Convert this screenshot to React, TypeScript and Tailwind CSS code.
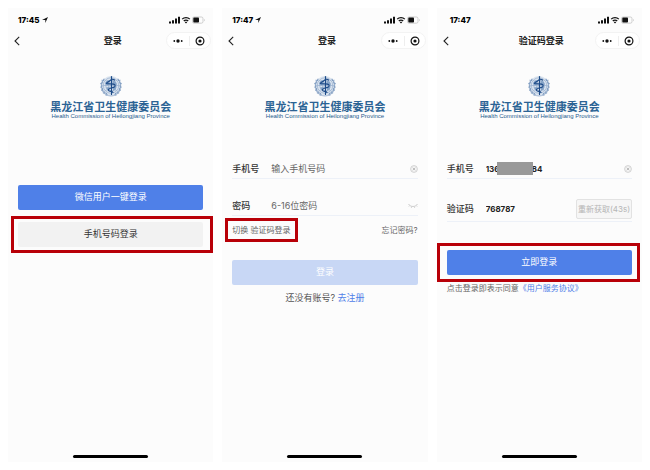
import type { ReactNode } from "react";

const leaf = "M0 0C1.6-.9 2.6-2.4 2.4-4.4C.8-3.6-.2-2 0 0Z";

const wreath = [
  [15, 40, -70],
  [9.5, 37, -50],
  [5.5, 32, -32],
  [3, 26, -18],
  [2.5, 19.5, -4],
  [4.5, 13.5, 12],
];

function Emblem() {
  return (
    <svg viewBox="0 0 44 44" className="size-[22px]" aria-hidden="true">
      <circle cx="22" cy="22" r="20" fill="#dbe4ef" />
      <g fill="none" stroke="#7c9ac0" strokeWidth="1">
        <circle cx="22" cy="21" r="15.500" />
        <circle cx="22" cy="21" r="10.500" />
        <circle cx="22" cy="21" r="5.500" />
        <path d="M6.500 21h31M11 10l22 22M33 10L11 32" />
      </g>
      <g fill="#86a4c8">
        <path d="M11 14l5-4 4 3-2 5-4 3-4-3zM25 10l7 4 2 5-5 2-4-5zM26 24l7-1-2 7-5 2zM12 25l6-1 1 6-4 1z" />
      </g>
      {[false, true].map((flip) => (
        <g key={String(flip)} transform={flip ? "translate(44 0) scale(-1 1)" : undefined}>
          <path d="M22 42C9.500 41.500 2.500 33 2.500 23C2.500 16 4.500 11 8 7" fill="none" stroke="#86a2c5" strokeWidth="1.400" />
          {wreath.map(([x, y, r]) => (
            <g key={y} transform={`translate(${x} ${y}) rotate(${r})`} fill="#7594bb">
              <path d={leaf} transform="scale(1.4)" />
              <path d={leaf} transform="scale(-.8 .9)" />
            </g>
          ))}
        </g>
      ))}
      <g fill="none" stroke="#1d4b88" strokeLinecap="round">
        <path d="M23 3v36" strokeWidth="2.200" />
        <path
          d="M29 10c-3-3-7-1-10 2c-3 2.500-6 3-6 5c3 2 14-1 17 3c2 4-4 5-8 6c-4 1.500-6 3-5 5c2 2.500 8 1 9 4"
          strokeWidth="2.400"
        />
      </g>
    </svg>
  );
}

function StatusIcons() {
  return (
    <svg viewBox="0 0 36 8" className="h-2 w-9" aria-hidden="true">
      <path d="M0 5.500h2v2H0zM3 4.200h2v3.300H3zM6 2.500h2v5H6zM9 .8h2v6.700H9z" fill="#111" />
      <g fill="none" stroke="#111" strokeWidth="1.300">
        <path d="M13.200 3.100c2-2.100 5.600-2.100 7.600 0" />
        <path d="M14.800 5c1.200-1.300 3.200-1.300 4.400 0" />
      </g>
      <path d="M17 7.600l-1.200-1.400c.7-.6 1.700-.6 2.400 0z" fill="#111" />
      <rect x="23.500" y="1" width="10.500" height="6.200" rx="1.600" fill="none" stroke="#bbb" strokeWidth=".7" />
      <rect x="24.300" y="1.600" width="5.700" height="5" rx=".8" fill="#111" />
      <path d="M35 3v2.200c.7-.3.7-1.900 0-2.200z" fill="#aaa" />
    </svg>
  );
}

type PhoneProps = {
  time: string;
  title: string;
  located?: boolean;
  children: ReactNode;
};

function Phone({ time, title, located, children }: PhoneProps) {
  return (
    <section className="flex flex-col bg-[#fcfcfc]">
      <div className={`flex h-6 items-center justify-between pr-2 ${located ? "pl-[10px]" : "pl-[13px]"}`}>
        <div className="flex items-center gap-[2px] text-[8px] leading-3 font-extrabold text-black">
          {time}
          {located && (
            <svg viewBox="0 0 10 10" className="size-[6px]" aria-hidden="true">
              <path d="M10 0L5.500 10V4.800H0z" fill="#111" />
            </svg>
          )}
        </div>
        <StatusIcons />
      </div>

      <header className="grid h-[17px] grid-cols-[1fr_auto_1fr] items-center pr-[2px] pl-[6px]">
        <button type="button" aria-label="返回" className="justify-self-start">
          <svg viewBox="0 0 6 10" className="h-[10px] w-[6px]" fill="none" stroke="#222" strokeWidth="1.100">
            <path d="M5.200.8L1 5l4.200 4.200" />
          </svg>
        </button>
        <h1 className="text-[9px] leading-3 font-bold text-[#222]">{title}</h1>
        <div className="flex h-[17px] items-center justify-self-end rounded-full border border-[#f3f3f3] bg-white">
          <button type="button" aria-label="更多" className="px-[6px]">
            <svg viewBox="0 0 10 4" className="h-1 w-[10px]" fill="#111">
              <circle cx="1.300" cy="2" r=".9" />
              <circle cx="5" cy="2" r="1.700" />
              <circle cx="8.700" cy="2" r=".9" />
            </svg>
          </button>
          <span className="h-[10px] w-px bg-[#eee]" />
          <button type="button" aria-label="关闭" className="px-[5px]">
            <svg viewBox="0 0 10 10" className="size-[10px]">
              <circle cx="5" cy="5" r="3.900" fill="none" stroke="#111" strokeWidth="1.200" />
              <circle cx="5" cy="5" r="1.600" fill="#111" />
            </svg>
          </button>
        </div>
      </header>

      <div className="mt-[26px] flex flex-col items-center">
        <Emblem />
        <p className="mt-1 text-[11px] leading-3 font-bold whitespace-nowrap text-[#2b6394]">
          黑龙江省卫生健康委员会
        </p>
        <p className="font-['Liberation_Sans'] text-[6px] leading-[7px] whitespace-nowrap text-[#1f5a8c]">
          Health Commission of Heilongjiang Province
        </p>
      </div>

      <div className="px-[10px]">{children}</div>

      <div className="mx-auto mt-auto mb-1 h-[3px] w-[75px] rounded-full bg-black" />
    </section>
  );
}

function ClearIcon() {
  return (
    <svg viewBox="0 0 8 8" className="size-2" aria-hidden="true">
      <circle cx="4" cy="4" r="3.400" fill="#f4f4f4" stroke="#c9c9c9" strokeWidth=".8" />
      <path d="M2.700 2.700l2.600 2.600M5.300 2.700L2.700 5.300" stroke="#b8b8b8" strokeWidth=".9" />
    </svg>
  );
}

function ClosedEyeIcon() {
  return (
    <svg viewBox="0 0 10 6" className="h-[6px] w-[10px]" fill="none" stroke="#c4c4c4" strokeWidth=".8" aria-hidden="true">
      <path d="M.5 1c2 3.300 7 3.300 9 0M1.800 2.500l-.9 1M3.700 3.500l-.4 1.400M6.300 3.500l.4 1.400M8.200 2.500l.9 1" />
    </svg>
  );
}

const label = "w-[39px] shrink-0 text-[9px] leading-3 font-medium text-[#333]";
const field = "w-full min-w-0 bg-transparent outline-none";
const row = "flex items-center border-b border-[#edf1f8]";
const primary = "h-[25px] w-full rounded-[2px] bg-[#4f80e8] pb-[2px] text-[9px] text-white";

function Highlight({ className }: { className: string }) {
  return <span className={`pointer-events-none absolute border-3 border-[#b80008] ${className}`} />;
}

export default function App() {
  return (
    <main className="grid min-h-screen grid-cols-3 gap-[9px] bg-white p-2 font-[Inter,'Noto_Sans_CJK_SC',sans-serif]">
      <Phone time="17:45" title="登录" located>
        <div className="mt-[65px] flex flex-col gap-3">
          <button type="button" className={primary}>
            微信用户一键登录
          </button>
          <div className="relative">
            <button type="button" className="block h-[25px] w-full rounded-[2px] bg-[#f2f2f2] pb-[2px] text-[9px] text-[#333]">
              手机号码登录
            </button>
            <Highlight className="-inset-y-[6px] -right-[10px] -left-[7px]" />
          </div>
        </div>
      </Phone>

      <Phone time="17:47" title="登录" located>
        <form className="mt-10">
          <div className={`${row} h-[19px]`}>
            <label htmlFor="login-phone" className={label}>手机号</label>
            <input
              id="login-phone"
              type="tel"
              placeholder="输入手机号码"
              className={`${field} text-[9px] leading-3 placeholder:text-[#666]`}
            />
            <button type="button" aria-label="清除"><ClearIcon /></button>
          </div>
          <div className={`${row} mt-[18px] h-[19px]`}>
            <label htmlFor="login-password" className={label}>密码</label>
            <input
              id="login-password"
              type="password"
              placeholder="6-16位密码"
              className={`${field} text-[9px] leading-3 placeholder:text-[#666]`}
            />
            <button type="button" aria-label="显示密码"><ClosedEyeIcon /></button>
          </div>
          <div className="mt-2 flex justify-between text-[8px] leading-3 text-[#666]">
            <a href="#code" className="relative">
              切换 验证码登录
              <Highlight className="-inset-x-[7px] -inset-y-[6px]" />
            </a>
            <a href="#forgot">忘记密码?</a>
          </div>
          <button
            type="button"
            disabled
            className="mt-6 block h-[25px] w-full rounded-[2px] bg-[#c8d7f5] pb-[2px] text-[9px] text-white"
          >
            登录
          </button>
          <p className="mt-[7px] text-center text-[9px] leading-3 text-[#555]">
            还没有账号? <a href="#register" className="text-[#4f80e8]">去注册</a>
          </p>
        </form>
      </Phone>

      <Phone time="17:47" title="验证码登录">
        <form className="mt-10">
          <div className={`${row} h-[19px]`}>
            <label htmlFor="code-phone" className={label}>手机号</label>
            <div className="relative grow">
              <input
                id="code-phone"
                type="tel"
                defaultValue="13600000084"
                className={`${field} block text-[8px] leading-3 font-bold text-[#222]`}
              />
              <span className="absolute -top-px left-[11px] h-[13px] w-9 bg-[#999]" />
            </div>
            <button type="button" aria-label="清除"><ClearIcon /></button>
          </div>
          <div className={`${row} mt-[18px] h-[25px]`}>
            <label htmlFor="code" className={label}>验证码</label>
            <input
              id="code"
              type="text"
              defaultValue="768787"
              className={`${field} text-[8px] leading-3 font-bold text-[#222]`}
            />
            <button
              type="button"
              disabled
              className="h-5 w-14 shrink-0 rounded-[2px] border border-[#e2e2e2] bg-[#f6f6f6] text-[8px] whitespace-nowrap text-[#b5b5b5]"
            >
              重新获取(43s)
            </button>
          </div>
          <div className="relative mt-7">
            <button type="button" className={`${primary} block`}>
              立即登录
            </button>
            <Highlight className="-inset-y-[7px] -right-2 -left-[10px]" />
          </div>
          <p className="mt-[7px] text-[8px] leading-3 whitespace-nowrap text-[#666]">
            点击登录即表示同意<a href="#terms" className="text-[#4f80e8]">《用户服务协议》</a>
          </p>
        </form>
      </Phone>
    </main>
  );
}
